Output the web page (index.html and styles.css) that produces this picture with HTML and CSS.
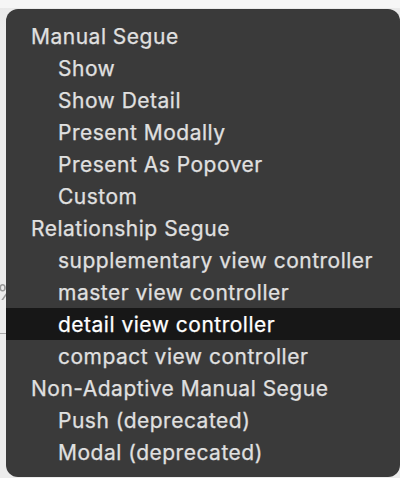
FILE: index.html
```html
<!DOCTYPE html>
<html>
<head>
<meta charset="utf-8">
<link rel="stylesheet" href="styles.css">
</head>
<body>
<div class="canvas">
  <span class="bg-glyph">%</span>
  <span class="bg-line"></span>
  <div class="menu">
    <div class="item header">Manual Segue</div>
    <div class="item sub">Show</div>
    <div class="item sub">Show Detail</div>
    <div class="item sub">Present Modally</div>
    <div class="item sub">Present As Popover</div>
    <div class="item sub">Custom</div>
    <div class="item header">Relationship Segue</div>
    <div class="item sub">supplementary view controller</div>
    <div class="item sub">master view controller</div>
    <div class="item sub selected">detail view controller</div>
    <div class="item sub">compact view controller</div>
    <div class="item header">Non-Adaptive Manual Segue</div>
    <div class="item sub">Push (deprecated)</div>
    <div class="item sub">Modal (deprecated)</div>
  </div>
</div>
</body>
</html>
```
FILE: styles.css
```css
html, body {
  margin: 0;
  padding: 0;
  background: #eeeeee;
  width: 400px;
  height: 478px;
  overflow: hidden;
}
.canvas {
  position: relative;
  width: 400px;
  height: 478px;
  padding: 9px 0 0 6px;
  box-sizing: border-box;
  background: linear-gradient(#f6f6f6 0, #f6f6f6 8px, #e9e9e9 8px, #ececec 30px);
}
.bg-glyph {
  position: absolute;
  left: -3px;
  top: 279px;
  font-family: "Inter", "Liberation Sans", sans-serif;
  font-size: 22px;
  color: #9a9a9a;
  filter: blur(0.6px);
}
.bg-line {
  position: absolute;
  left: 0;
  top: 333px;
  width: 10px;
  height: 1px;
  background: #a9a9a9;
}
.menu {
  position: relative;
  width: 394px;
  height: 468px;
  box-sizing: border-box;
  padding: 11px 0 8px;
  background: #3a3a3a;
  border-radius: 12px;
  font-family: "Inter", "Liberation Sans", sans-serif;
  font-size: 21px;
  letter-spacing: 0.5px;
  color: #e0e0e0;
  -webkit-text-stroke: 0.25px currentColor;
  display: flex;
  flex-direction: column;
}
.item {
  height: 32px;
  line-height: 33px;
  padding-left: 25px;
  white-space: nowrap;
}
.item.sub {
  padding-left: 52px;
}
.item.selected {
  background: #171717;
  color: #ffffff;
}
```
